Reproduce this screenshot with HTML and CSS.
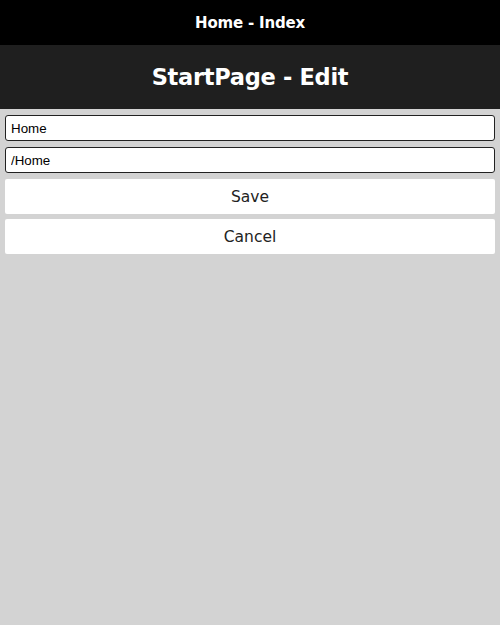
FILE: index.html
```html
<!DOCTYPE html>
<html>
<head>
<meta charset="utf-8">
<link rel="stylesheet" href="styles.css">
</head>
<body>
<header class="topbar">Home - Index</header>
<div class="pagehead"><h1 class="pagetitle">StartPage - Edit</h1></div>
<form class="form">
  <input class="field" type="text" value="Home">
  <input class="field" type="text" value="/Home">
  <button class="btn" type="button">Save</button>
  <button class="btn btn-next" type="button">Cancel</button>
</form>
</body>
</html>
```
FILE: styles.css
```css
html, body {
  margin: 0;
  padding: 0;
  background: #d3d3d3;
  height: 100%;
}
body {
  font-family: "DejaVu Sans", "Open Sans", sans-serif;
}
.topbar {
  background: #000;
  color: #fff;
  height: 45px;
  display: flex;
  align-items: center;
  justify-content: center;
  font-weight: bold;
  font-size: 15px;
  letter-spacing: -0.2px;
}
.pagehead {
  background: #1f1f1f;
  height: 64px;
  display: flex;
  align-items: center;
  justify-content: center;
}
.pagetitle {
  margin: 0;
  color: #fff;
  font-size: 22.5px;
  font-weight: bold;
  letter-spacing: -0.3px;
}
.form {
  display: flex;
  flex-direction: column;
  padding: 6px 5px;
  gap: 6px;
}
.field {
  box-sizing: border-box;
  height: 26px;
  border: 1px solid #222;
  border-radius: 3px;
  background: #fff;
  padding: 0 5px;
  font-family: "Liberation Sans", Arial, sans-serif;
  font-size: 13.33px;
  color: #000;
  margin: 0;
}
.btn {
  box-sizing: border-box;
  height: 35px;
  border: none;
  border-radius: 2px;
  background: #fff;
  font-family: "DejaVu Sans", sans-serif;
  font-size: 15.5px;
  color: #222;
  margin: 0;
  padding: 0;
}
.btn-next {
  margin-top: -1px;
}
```
